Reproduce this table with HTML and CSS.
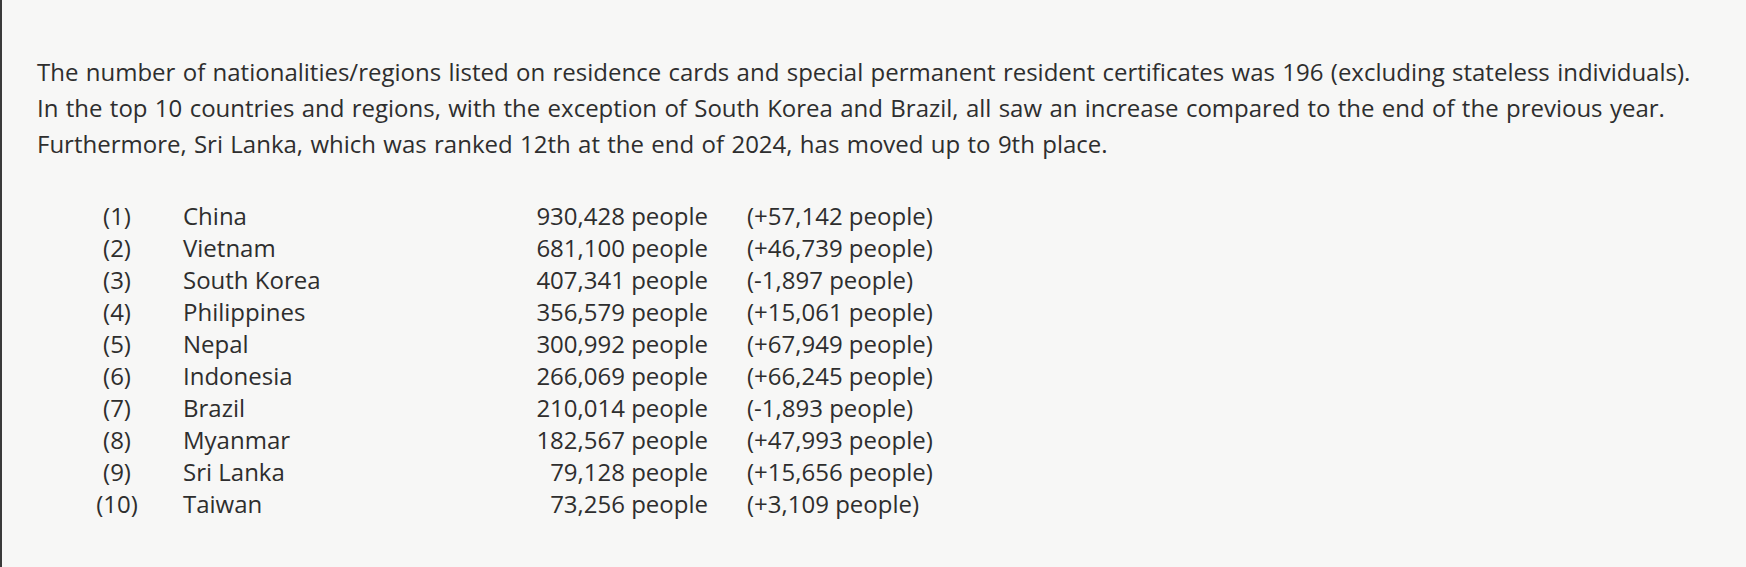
FILE: index.html
```html
<!DOCTYPE html>
<html lang="en">
<head>
<meta charset="utf-8">
<title>Nationalities</title>
<link rel="stylesheet" href="styles.css">
</head>
<body>
<main class="page">
  <p class="intro">The number of nationalities/regions listed on residence cards and special permanent resident certificates was 196 (excluding stateless individuals).<br>In the top 10 countries and regions, with the exception of South Korea and Brazil, all saw an increase compared to the end of the previous year.<br>Furthermore, Sri Lanka, which was ranked 12th at the end of 2024, has moved up to 9th place.</p>
  <div class="ranking">
    <span class="rank">(1)</span><span class="name">China</span><span class="count">930,428 people</span><span class="diff">(+57,142 people)</span>
    <span class="rank">(2)</span><span class="name">Vietnam</span><span class="count">681,100 people</span><span class="diff">(+46,739 people)</span>
    <span class="rank">(3)</span><span class="name">South Korea</span><span class="count">407,341 people</span><span class="diff">(-1,897 people)</span>
    <span class="rank">(4)</span><span class="name">Philippines</span><span class="count">356,579 people</span><span class="diff">(+15,061 people)</span>
    <span class="rank">(5)</span><span class="name">Nepal</span><span class="count">300,992 people</span><span class="diff">(+67,949 people)</span>
    <span class="rank">(6)</span><span class="name">Indonesia</span><span class="count">266,069 people</span><span class="diff">(+66,245 people)</span>
    <span class="rank">(7)</span><span class="name">Brazil</span><span class="count">210,014 people</span><span class="diff">(-1,893 people)</span>
    <span class="rank">(8)</span><span class="name">Myanmar</span><span class="count">182,567 people</span><span class="diff">(+47,993 people)</span>
    <span class="rank">(9)</span><span class="name">Sri Lanka</span><span class="count">79,128 people</span><span class="diff">(+15,656 people)</span>
    <span class="rank">(10)</span><span class="name">Taiwan</span><span class="count">73,256 people</span><span class="diff">(+3,109 people)</span>
  </div>
</main>
</body>
</html>
```
FILE: styles.css
```css
html, body {
  margin: 0;
  padding: 0;
  background: #f7f7f6;
}
.page {
  box-sizing: border-box;
  height: 567px;
  border-left: 2px solid #3a3a3a;
  padding: 54px 0 0 35px;
  font-family: "Open Sans", "Noto Sans", sans-serif;
  font-size: 24px;
  color: #2e2e2e;
}
.intro {
  margin: 0;
  line-height: 36px;
  word-spacing: 1.1px;
}
.ranking {
  margin: 38px 0 0 42px;
  display: grid;
  grid-template-columns: 76px 297px 200px auto;
  column-gap: 28px;
  line-height: 32px;
}
.rank {
  text-align: center;
}
.count {
  text-align: right;
}
.diff {
  padding-left: 11px;
}
```
